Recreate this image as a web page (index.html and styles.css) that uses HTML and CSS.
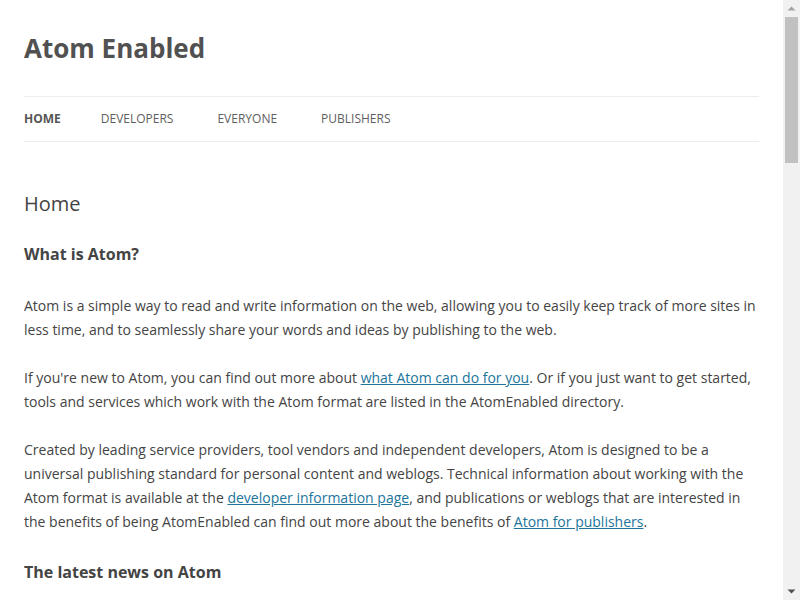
FILE: index.html
```html
<!doctype html>
<html>

<head>
    <meta charset="UTF-8">
    <meta content="width=device-width, initial-scale=1" name="viewport">
    <title>Atom Enabled</title>
    <link rel="stylesheet" href="styles.css">
</head>

<body>
<div class="site">
    <header class="siteHeader">
        <h1 class="siteTitle"><a href="#">Atom Enabled</a></h1>
        <nav class="mainNav">
            <ul>
                <li class="current"><a href="#">Home</a></li>
                <li><a href="#">Developers</a></li>
                <li><a href="#">Everyone</a></li>
                <li><a href="#">Publishers</a></li>
            </ul>
        </nav>
    </header>
    <main class="content">
        <h1 class="entryTitle">Home</h1>
        <div class="entryContent">
            <h2>What is Atom?</h2>
            <p>Atom is a simple way to read and write information on the web, allowing you to easily keep track of more sites in less time, and to seamlessly share your words and ideas by publishing to the web.</p>
            <p>If you're new to Atom, you can find out more about <a href="#">what Atom can do for you</a>. Or if you just want to get started, tools and services which work with the Atom format are listed in the AtomEnabled directory.</p>
            <p>Created by leading service providers, tool vendors and independent developers, Atom is designed to be a universal publishing standard for personal content and weblogs. Technical information about working with the Atom format is available at the <a href="#">developer information page</a>, and publications or weblogs that are interested in the benefits of being AtomEnabled can find out more about the benefits of <a href="#">Atom for publishers</a>.</p>
            <h2>The latest news on Atom</h2>
            <p>&nbsp;</p>
        </div>
    </main>
</div>
<div class="scrollbar">
    <svg class="arrow" width="17" height="17" viewBox="0 0 17 17"><path d="M4.5 10.5h8l-4-4z" fill="#a3a3a3"/></svg>
    <div class="thumb"></div>
    <div class="track"></div>
    <svg class="arrow" width="17" height="17" viewBox="0 0 17 17"><path d="M4.5 6.5h8l-4 4z" fill="#505050"/></svg>
</div>
</body>

</html>
```

FILE: styles.css
```css
body {
    margin: 0;
    background-color: #fff;
    color: #444;
    font-family: "Open Sans", "Liberation Sans", sans-serif;
    font-size: 14px;
    line-height: 24px;
}

a {
    color: #21759b;
}

.site {
    padding: 0 41px 48px 24px;
}

.siteHeader {
    padding: 24px 0;
}

.siteTitle {
    margin: 0;
    font-size: 26px;
    line-height: 48px;
    font-weight: bold;
}

.siteTitle a {
    color: #515151;
    text-decoration: none;
}

.mainNav {
    margin-top: 24px;
    border-top: 1px solid #ededed;
    border-bottom: 1px solid #ededed;
}

.mainNav ul {
    margin: 0;
    padding: 0;
    list-style: none;
    display: flex;
}

.mainNav li {
    margin-right: 44px;
}

.mainNav li.current {
    margin-right: 40px;
}

.mainNav a {
    display: block;
    font-size: 12px;
    line-height: 44px;
    text-transform: uppercase;
    text-decoration: none;
    color: #5e5e5e;
}

.mainNav .current a {
    font-weight: bold;
    color: #555;
}

.content {
    margin-top: 26px;
}

.entryTitle {
    margin: 0 0 24px;
    font-size: 20px;
    line-height: 24px;
    font-weight: normal;
}

.entryContent h2 {
    margin: 0 0 24px;
    font-size: 16px;
    line-height: 1.846;
    font-weight: bold;
}

.entryContent p {
    margin: 0 0 24px;
}

/* window scrollbar */
.scrollbar {
    position: fixed;
    top: 0;
    right: 0;
    width: 17px;
    height: 100vh;
    background-color: #f1f1f1;
    display: flex;
    flex-direction: column;
}

.scrollbar .arrow {
    display: block;
    flex: none;
}

.scrollbar .thumb {
    flex: none;
    height: 146px;
    margin: 0 2px;
    background-color: #c1c1c1;
}

.scrollbar .track {
    flex: 1;
}
```
